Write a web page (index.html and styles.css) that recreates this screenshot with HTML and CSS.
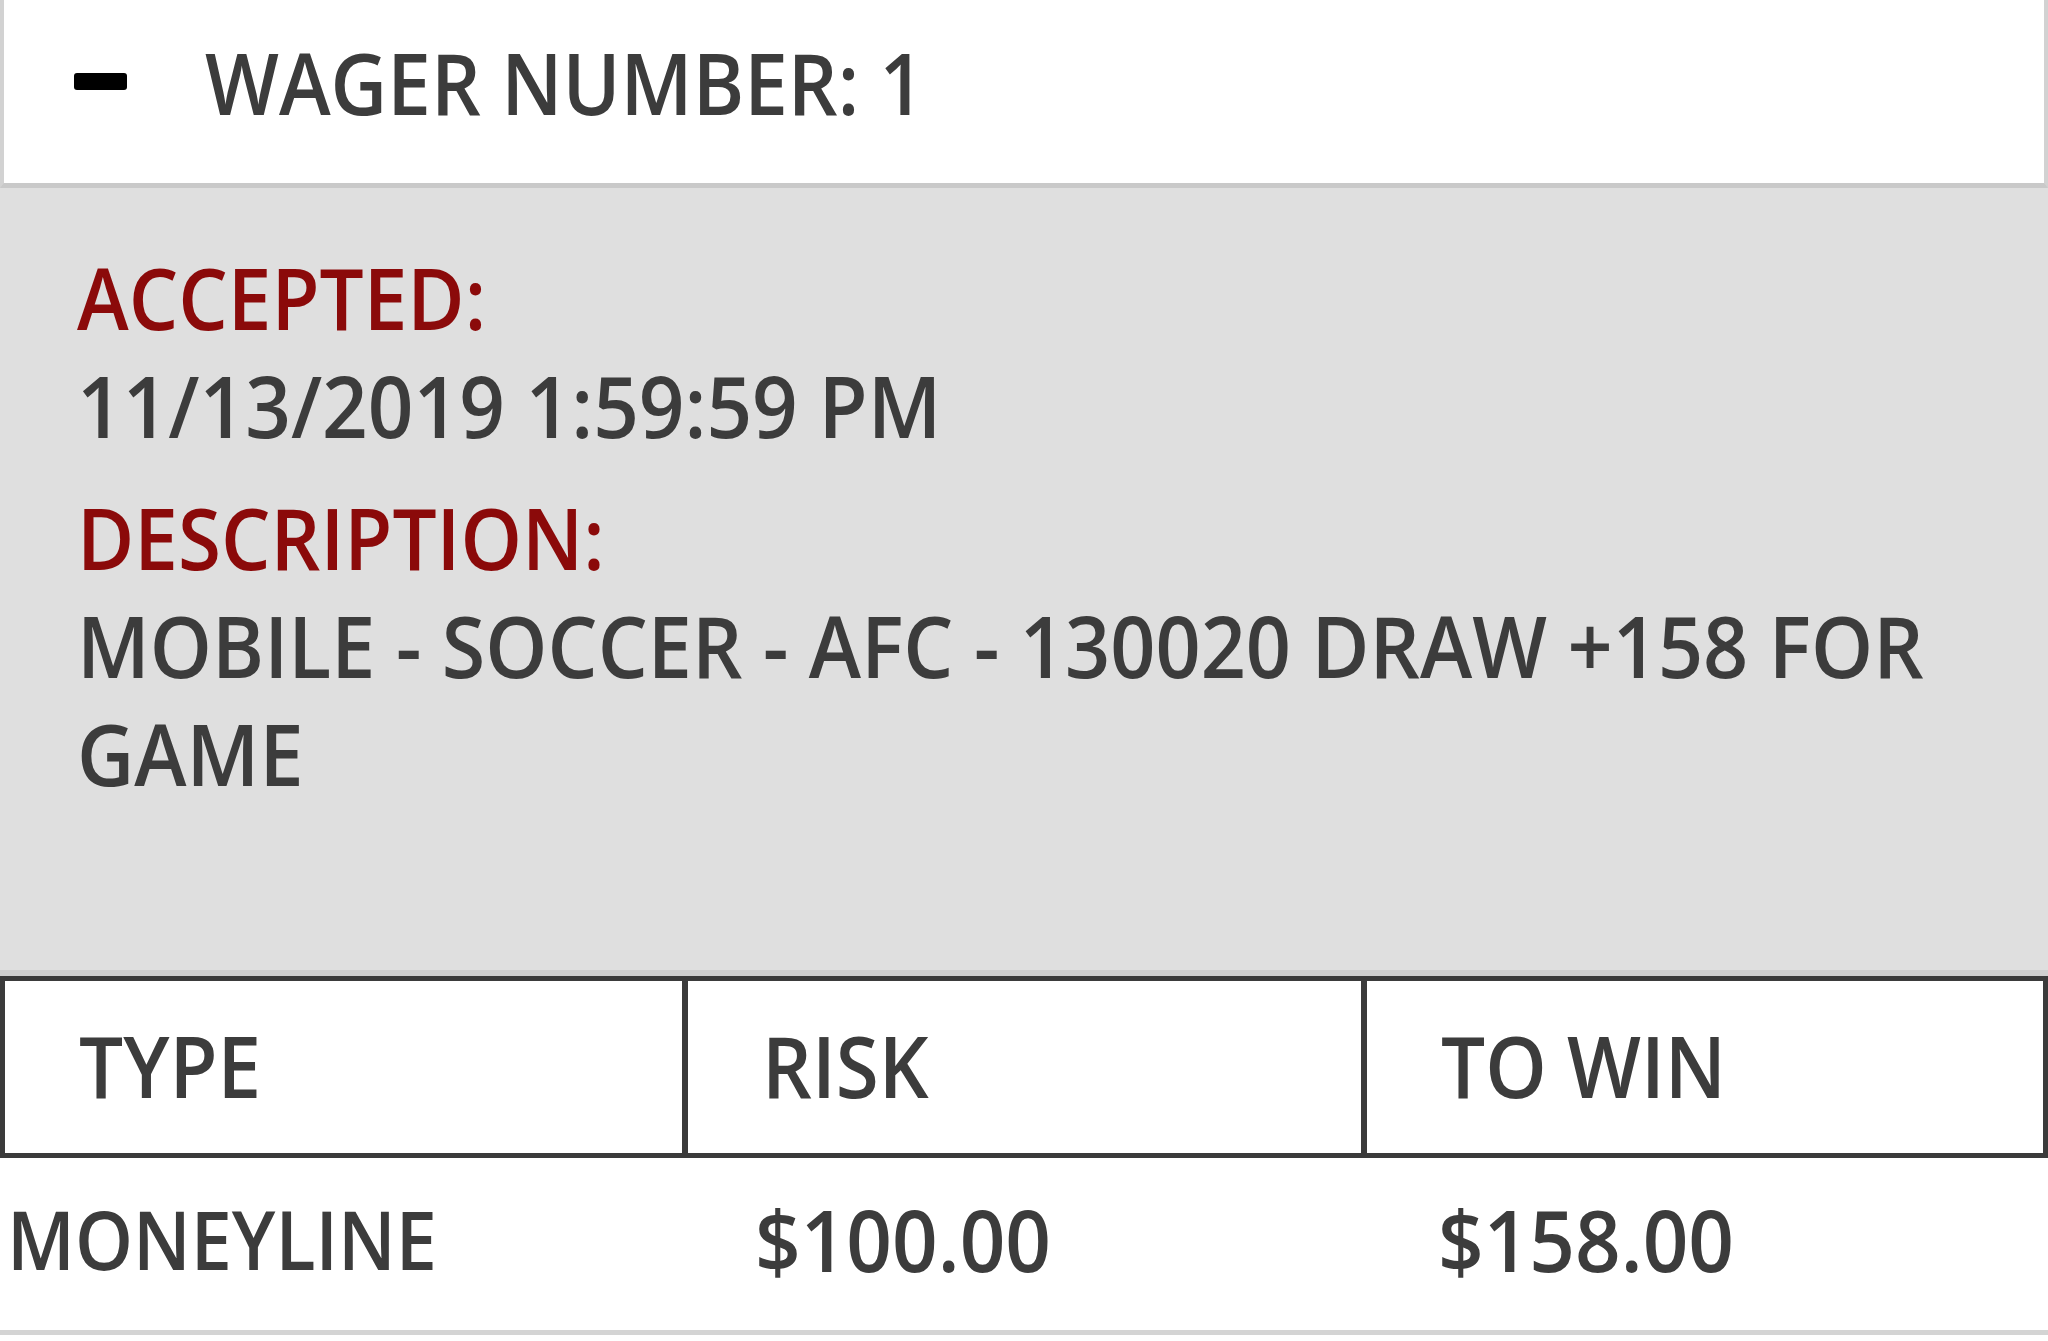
FILE: index.html
```html
<!DOCTYPE html>
<html lang="en">
<head>
<meta charset="utf-8">
<title>Wager</title>
<link rel="stylesheet" href="styles.css">
</head>
<body>
<div class="wager">
  <div class="wager-header">
    <span class="minus"></span>
    <span class="wager-title txt">WAGER NUMBER: 1</span>
  </div>
  <div class="wager-body">
    <div class="label txt">ACCEPTED:</div>
    <div class="value txt num">11/13/2019 1:59:59 PM</div>
    <div class="label label-gap txt">DESCRIPTION:</div>
    <div class="value wide txt">MOBILE - SOCCER - AFC - 130020 DRAW +158 FOR GAME</div>
  </div>
  <div class="table-head">
    <div class="th"><span class="txt">TYPE</span></div>
    <div class="th th-mid"><span class="txt">RISK</span></div>
    <div class="th th-last"><span class="txt">TO WIN</span></div>
  </div>
  <div class="table-row">
    <div class="td td-first"><span class="txt type-name">MONEYLINE</span></div>
    <div class="td"><span class="txt num">$100.00</span></div>
    <div class="td"><span class="txt num">$158.00</span></div>
  </div>
</div>
</body>
</html>
```
FILE: styles.css
```css
html, body {
  margin: 0;
  padding: 0;
  background: #ffffff;
}
body {
  font-family: "Open Sans", "Liberation Sans", sans-serif;
  font-weight: 600;
  font-size: 85px;
  line-height: 108px;
  color: #3c3c3c;
}
.wager {
  width: 2048px;
  overflow: hidden;
}
/* the source renders its type slightly condensed */
.txt {
  display: block;
  transform: scaleX(0.92);
  transform-origin: left center;
  white-space: nowrap;
}
.txt.num {
  transform: scaleX(0.94);
}
.wager-header {
  box-sizing: border-box;
  height: 188px;
  display: flex;
  align-items: center;
  padding-left: 70px;
  padding-bottom: 20px;
  background: #ffffff;
  border-left: 4px solid #d2d2d2;
  border-right: 4px solid #d2d2d2;
  border-bottom: 5px solid #c9c9c9;
}
.minus {
  display: block;
  width: 53px;
  height: 17px;
  background: #000000;
  border-radius: 3px;
  margin-right: 78px;
}
.wager-body {
  background: #dfdfdf;
  padding: 55px 60px 163px 77px;
  border-bottom: 6px solid #d0d0d0;
  overflow: hidden;
}
.label {
  color: #8b0a0a;
}
.label-gap {
  margin-top: 24px;
}
.value.wide {
  white-space: normal;
  width: 2050px;
  transform: scaleX(0.93);
}
.table-head {
  display: grid;
  grid-template-columns: 677px 679px 1fr;
  height: 182px;
  box-sizing: border-box;
  border: 5px solid #3b3b3b;
  background: #ffffff;
}
.th {
  display: flex;
  align-items: center;
  padding-left: 74px;
  padding-bottom: 4px;
}
.th-mid, .th-last {
  border-left: 6px solid #3b3b3b;
}
.table-row {
  display: grid;
  grid-template-columns: 683px 683px 1fr;
  height: 177px;
  box-sizing: border-box;
  padding-top: 27px;
  border-bottom: 5px solid #d4d4d4;
}
.td {
  padding-left: 72px;
}
.td-first {
  padding-left: 7px;
}
.type-name {
  font-size: 81px;
  transform: scaleX(0.91);
}
```
